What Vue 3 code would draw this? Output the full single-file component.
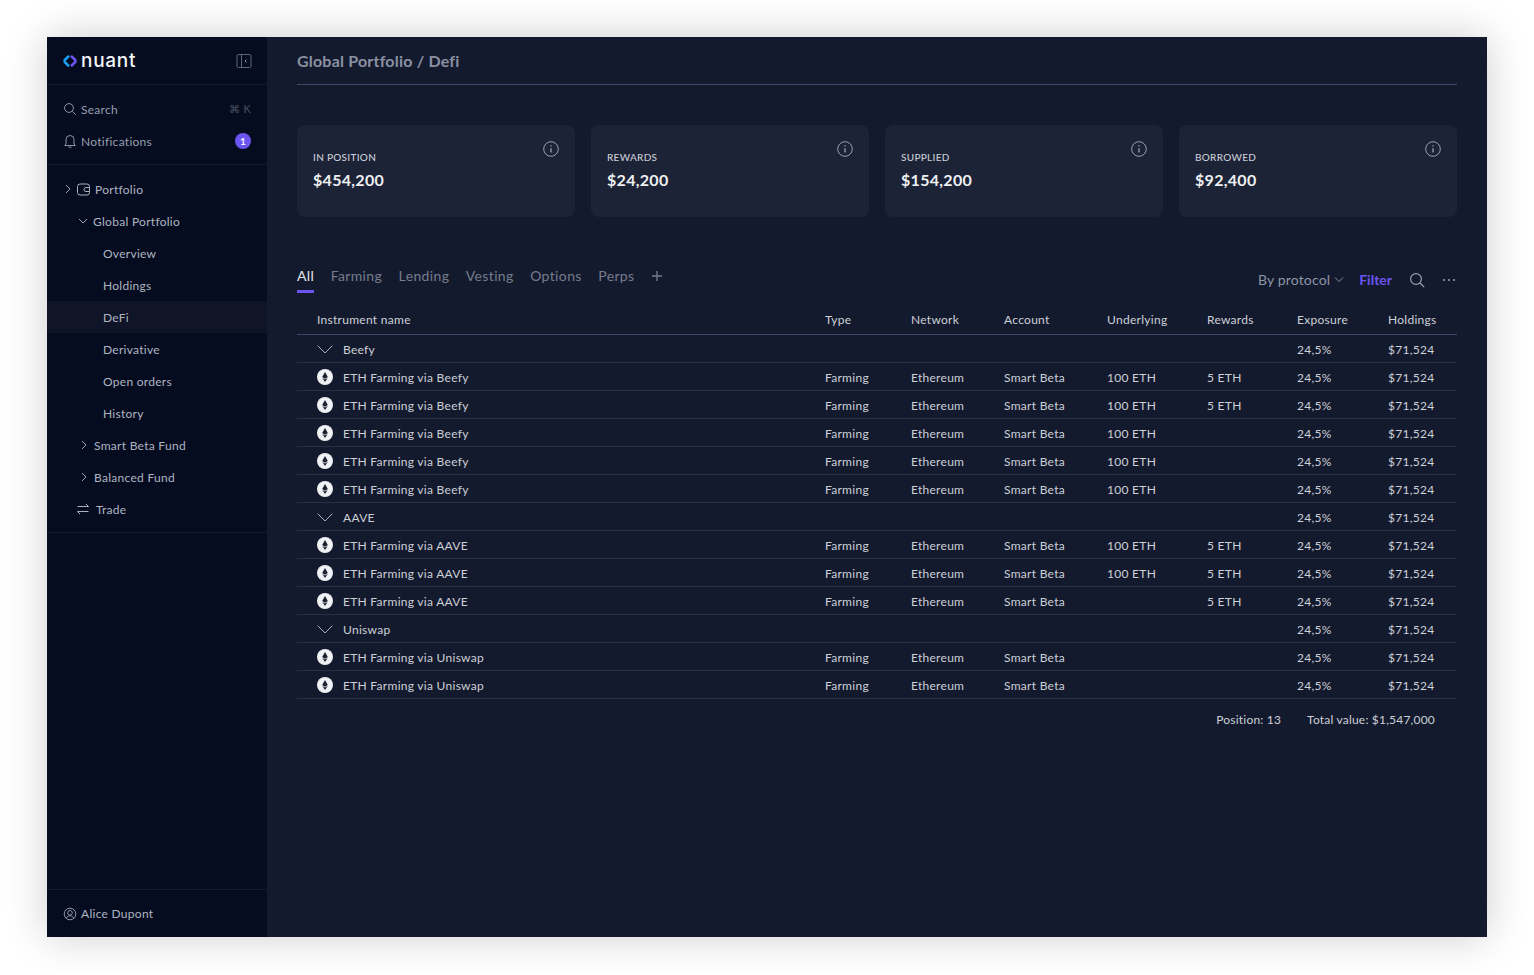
<script setup>
const cards = [
  { label: 'IN POSITION', value: '$454,200' },
  { label: 'REWARDS', value: '$24,200' },
  { label: 'SUPPLIED', value: '$154,200' },
  { label: 'BORROWED', value: '$92,400' },
]
const tabs = ['All', 'Farming', 'Lending', 'Vesting', 'Options', 'Perps']
const nav = [
  { label: 'Overview', cls: 'leaf' },
  { label: 'Holdings', cls: 'leaf' },
  { label: 'DeFi', cls: 'leaf active' },
  { label: 'Derivative', cls: 'leaf' },
  { label: 'Open orders', cls: 'leaf' },
  { label: 'History', cls: 'leaf' },
]
const columns = ['Instrument name', 'Type', 'Network', 'Account', 'Underlying', 'Rewards', 'Exposure', 'Holdings']
const r = (name, underlying, rewards) => ({ name, underlying, rewards })
const groups = [
  { name: 'Beefy', rows: [
    r('ETH Farming via Beefy', '100 ETH', '5 ETH'),
    r('ETH Farming via Beefy', '100 ETH', '5 ETH'),
    r('ETH Farming via Beefy', '100 ETH', ''),
    r('ETH Farming via Beefy', '100 ETH', ''),
    r('ETH Farming via Beefy', '100 ETH', ''),
  ] },
  { name: 'AAVE', rows: [
    r('ETH Farming via AAVE', '100 ETH', '5 ETH'),
    r('ETH Farming via AAVE', '100 ETH', '5 ETH'),
    r('ETH Farming via AAVE', '', '5 ETH'),
  ] },
  { name: 'Uniswap', rows: [
    r('ETH Farming via Uniswap', '', ''),
    r('ETH Farming via Uniswap', '', ''),
  ] },
]
</script>

<template>
  <div class="app">
    <aside class="sidebar">
      <div class="brand">
        <div class="logo">
          <svg width="14" height="12" viewBox="0 0 14 12" fill="none" stroke-width="2.5" stroke-linejoin="round" stroke-linecap="round">
            <path d="M5.300 1.500 1.700 5v2l3.600 3.500" stroke="#1e9bf5" />
            <path d="M8.700 1.500 12.300 5v2l-3.600 3.500" stroke="#6b55f0" />
          </svg>
          <span class="logo-text">nuant</span>
        </div>
        <svg class="collapse" width="16" height="16" viewBox="0 0 16 16" fill="none" stroke="#5d6678" stroke-width="1">
          <rect x="1" y="1.500" width="14" height="13" rx="1.500" />
          <path d="M5.500 1.500v13" />
          <path d="M10.500 6.500 9 8l1.500 1.500" stroke="#8a92a3" />
        </svg>
      </div>

      <div class="section">
        <div class="row top">
          <svg class="ic" width="14" height="14" viewBox="0 0 14 14" fill="none" stroke="#8d94a5" stroke-width="1">
            <circle cx="6" cy="6" r="4.400" /><path d="m9.300 9.300 3.400 3.400" />
          </svg>
          <span>Search</span>
          <span class="kbd">⌘ K</span>
        </div>
        <div class="row top">
          <svg class="ic" width="14" height="14" viewBox="0 0 14 14" fill="none" stroke="#8d94a5" stroke-width="1">
            <path d="M3 10V5.500a4 4 0 0 1 8 0V10l1.300 1.500H1.700z" /><path d="M5.500 13.200h3" />
          </svg>
          <span>Notifications</span>
          <span class="badge">1</span>
        </div>
      </div>

      <div class="section tree">
        <div class="row l0">
          <svg class="chev" width="8" height="10" viewBox="0 0 8 10" fill="none" stroke="#9aa1b0"><path d="m2 1 4 4-4 4" /></svg>
          <svg class="wallet" width="13" height="13" viewBox="0 0 13 13" fill="none" stroke="#aab0bd">
            <rect x="0.500" y="1" width="12" height="11" rx="2.500" /><path d="M12.500 4.500H9a2 2 0 0 0 0 4h3.500" />
          </svg>
          <span>Portfolio</span>
        </div>
        <div class="row l1">
          <svg width="10" height="8" viewBox="0 0 10 8" fill="none" stroke="#9aa1b0"><path d="m1 2 4 4 4-4" /></svg>
          <span>Global Portfolio</span>
        </div>
        <div v-for="item in nav" :key="item.label" class="row" :class="item.cls">{{ item.label }}</div>
        <div class="row l1b">
          <svg width="6" height="10" viewBox="0 0 6 10" fill="none" stroke="#9aa1b0"><path d="m1 1 4 4-4 4" /></svg>
          <span>Smart Beta Fund</span>
        </div>
        <div class="row l1b">
          <svg width="6" height="10" viewBox="0 0 6 10" fill="none" stroke="#9aa1b0"><path d="m1 1 4 4-4 4" /></svg>
          <span>Balanced Fund</span>
        </div>
        <div class="row l0b">
          <svg width="12" height="12" viewBox="0 0 12 12" fill="none" stroke="#aab0bd">
            <path d="M.500 3.500h11M9 1l2.500 2.500M11.500 8.500H.500M3 11 .500 8.500" />
          </svg>
          <span>Trade</span>
        </div>
      </div>

      <div class="spacer"></div>

      <div class="user">
        <svg class="ic" width="14" height="14" viewBox="0 0 14 14" fill="none" stroke="#8d94a5">
          <circle cx="7" cy="7" r="5.800" /><circle cx="7" cy="5.800" r="2.300" /><path d="M3.200 11.200c.8-1.600 2.100-2.400 3.800-2.400s3 .8 3.800 2.400" />
        </svg>
        <span>Alice Dupont</span>
      </div>
    </aside>

    <main class="main">
      <header class="title">Global Portfolio / Defi</header>

      <section class="cards">
        <div v-for="c in cards" :key="c.label" class="card">
          <div class="card-label">{{ c.label }}</div>
          <div class="card-value">{{ c.value }}</div>
          <svg class="info" width="16" height="16" viewBox="0 0 16 16" fill="none" stroke="#9aa1b0">
            <circle cx="8" cy="8" r="7.300" /><path d="M8 7.200v4.300" stroke-width="1.300" /><path d="M8 4.300v1.300" stroke-width="1.300" />
          </svg>
        </div>
      </section>

      <section class="toolbar">
        <nav class="tabs">
          <span v-for="(t, i) in tabs" :key="t" class="tab" :class="{ on: i === 0 }">{{ t }}</span>
          <svg class="plus" width="12" height="12" viewBox="0 0 12 12" fill="none" stroke="#747c8e" stroke-width="1.300"><path d="M6 1v10M1 6h10" /></svg>
        </nav>
        <div class="tools">
          <span class="by">By protocol</span>
          <svg class="by-chev" width="10" height="7" viewBox="0 0 10 7" fill="none" stroke="#8d94a5"><path d="m1 1.500 4 4 4-4" /></svg>
          <span class="filter">Filter</span>
          <svg class="tool-search" width="16" height="16" viewBox="0 0 16 16" fill="none" stroke="#9aa1b0" stroke-width="1.200">
            <circle cx="7" cy="7" r="5.400" /><path d="m11 11 4.200 4.200" />
          </svg>
          <svg class="dots" width="14" height="4" viewBox="0 0 14 4" fill="#9aa1b0">
            <circle cx="2" cy="2" r="1" /><circle cx="7" cy="2" r="1" /><circle cx="12" cy="2" r="1" />
          </svg>
        </div>
      </section>

      <section class="table">
        <div class="tr head">
          <span v-for="c in columns" :key="c">{{ c }}</span>
        </div>
        <template v-for="g in groups" :key="g.name">
          <div class="tr">
            <span class="name">
              <svg width="16" height="9" viewBox="0 0 16 9" fill="none" stroke="#aab0bd"><path d="m.7.700 7.300 7.300 7.300-7.300" /></svg>
              {{ g.name }}
            </span>
            <span></span><span></span><span></span><span></span><span></span>
            <span>24,5%</span><span>$71,524</span>
          </div>
          <div v-for="(row, i) in g.rows" :key="i" class="tr">
            <span class="name">
              <span class="coin">
                <svg width="6" height="10" viewBox="0 0 6 10"><path d="M3 0 .2 5 3 6.700 5.800 5z" fill="#1a2030" /><path d="M.2 5.800 3 10l2.800-4.200L3 7.500z" fill="#1a2030" /></svg>
              </span>
              {{ row.name }}
            </span>
            <span>Farming</span><span>Ethereum</span><span>Smart Beta</span>
            <span>{{ row.underlying }}</span><span>{{ row.rewards }}</span>
            <span>24,5%</span><span>$71,524</span>
          </div>
        </template>
      </section>

      <footer class="summary">
        <span>Position: 13</span>
        <span>Total value: $1,547,000</span>
      </footer>
    </main>
  </div>
</template>

<style>
html, body { margin: 0; background: #fff; }
</style>

<style scoped>
.app {
  box-sizing: border-box;
  width: 1440px;
  height: 900px;
  margin: 37px 47px;
  display: flex;
  background: #141a2d;
  box-shadow: 0 0 40px rgba(0, 0, 0, 0.2);
  font-family: "Lato", "Noto Sans", sans-serif;
  font-size: 12px;
  letter-spacing: 0.28px;
  color: #d4d8e0;
}
.sidebar {
  width: 220px;
  flex: none;
  background: #060c20;
  display: flex;
  flex-direction: column;
  color: #aeb4c0;
}
.brand {
  box-sizing: border-box;
  height: 48px;
  padding: 0 15px 0 16px;
  display: flex;
  align-items: center;
  justify-content: space-between;
  border-bottom: 1px solid #171d30;
}
.logo { display: flex; align-items: center; gap: 4px; }
.logo-text { font-family: "Inter", sans-serif; color: #f3f4f7; font-size: 19px; font-weight: 500; letter-spacing: 0.7px; line-height: 1; margin-top: -1px; }
.section { padding: 8px 0 7px; border-bottom: 1px solid #171d30; }
.row { height: 32px; display: flex; align-items: center; box-sizing: border-box; }
.top { padding: 0 16px; gap: 4px; color: #979eae; }
.kbd { margin-left: auto; color: #474f62; font-size: 11px; }
.badge {
  margin-left: auto;
  width: 16px;
  height: 16px;
  border-radius: 50%;
  background: #6b55f0;
  color: #f1f0ff;
  font-size: 10px;
  font-weight: 700;
  letter-spacing: 0;
  display: flex;
  align-items: center;
  justify-content: center;
}
.tree { padding: 8px 0 7px; }
.l0 { padding-left: 17px; gap: 4px; }
.wallet { margin-right: 1px; margin-left: 1px; }
.l1 { padding-left: 31px; gap: 5px; }
.leaf { padding-left: 56px; }
.active { background: #0f1527; }
.l1b { padding-left: 34px; gap: 7px; }
.l0b { padding-left: 30px; gap: 7px; }
.spacer { flex: 1; }
.user {
  box-sizing: border-box;
  height: 48px;
  padding: 0 16px;
  display: flex;
  align-items: center;
  gap: 4px;
  border-top: 1px solid #171d30;
  color: #aeb4c0;
}
.main { flex: 1; min-width: 0; padding: 0 30px; }
.title {
  box-sizing: border-box;
  height: 48px;
  display: flex;
  align-items: center;
  border-bottom: 1px solid #3b4a68;
  font-size: 16px;
  font-weight: 700;
  letter-spacing: 0.2px;
  color: #8a91a2;
}
.cards { display: grid; grid-template-columns: repeat(4, 1fr); gap: 16px; margin-top: 40px; }
.card {
  position: relative;
  box-sizing: border-box;
  height: 92px;
  padding: 26px 16px 0;
  background: #1d2336;
  border-radius: 8px;
}
.card-label { font-size: 10px; line-height: 13px; letter-spacing: 0.3px; color: #c9cdd6; font-weight: 500; }
.card-value { margin-top: 5px; font-size: 16px; line-height: 22px; letter-spacing: 0.3px; font-weight: 700; color: #eef0f3; }
.info { position: absolute; top: 16px; right: 16px; }
.toolbar { display: flex; justify-content: space-between; margin: 42px 0 11px; height: 35px; }
.tabs { display: flex; align-items: flex-start; gap: 16.500px; font-size: 14px; letter-spacing: 0.36px; color: #747c8e; }
.tab { height: 34px; line-height: 34px; box-sizing: border-box; }
.tab.on { color: #e2e5ea; border-bottom: 3px solid #6b55f0; }
.plus { margin-top: 11px; }
.tools { display: flex; align-items: center; color: #8d94a5; font-size: 14px; letter-spacing: 0.15px; padding-top: 6px; box-sizing: border-box; height: 35px; }
.by-chev { margin-left: 4px; }
.filter { margin-left: 15px; color: #6b55f0; font-weight: 700; letter-spacing: 0; }
.tool-search { margin-left: 17px; }
.dots { margin-left: 17px; margin-right: 1px; }
.tr {
  box-sizing: border-box;
  display: grid;
  grid-template-columns: 528px 86px 93px 103px 100px 90px 91px 1fr;
  height: 28px;
  padding-top: 1px;
  align-items: center;
  border-bottom: 1px solid #262f45;
  color: #ccd0d8;
}
.tr > span:first-child { padding-left: 20px; }
.head { height: 30px; padding-top: 0; border-bottom-color: #3b4a68; }
.name { display: flex; align-items: center; gap: 10px; }
.coin {
  width: 16px;
  height: 16px;
  border-radius: 50%;
  background: #f0f1f4;
  display: flex;
  align-items: center;
  justify-content: center;
}
.summary { display: flex; justify-content: flex-end; gap: 26px; padding: 13px 22px 0 0; line-height: 16px; letter-spacing: 0.2px; color: #ccd0d8; }
</style>
